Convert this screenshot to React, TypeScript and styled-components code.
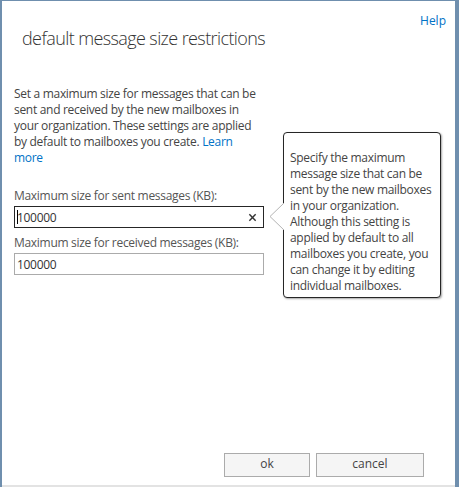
import { createGlobalStyle, styled } from "styled-components";

const GlobalStyle = createGlobalStyle`
  html, body {
    margin: 0;
    padding: 0;
    background: #ffffff;
  }
  body {
    font-family: "Open Sans", "Noto Sans", "Liberation Sans", sans-serif;
  }
`;

const INFO_LINES = [
  "Set a maximum size for messages that can be",
  "sent and received by the new mailboxes in",
  "your organization. These settings are applied",
];

const TIP_LINES = [
  "Specify the maximum",
  "message size that can be",
  "sent by the new mailboxes",
  "in your organization.",
  "Although this setting is",
  "applied by default to all",
  "mailboxes you create, you",
  "can change it by editing",
  "individual mailboxes.",
];

export default function App() {
  return (
    <>
      <GlobalStyle />
      <Window>
        <Dialog>
          <TopBar>
            <HelpLink href="#">Help</HelpLink>
          </TopBar>
          <Title>default message size restrictions</Title>
          <Body>
            <Info>
              {INFO_LINES.map((line) => (
                <div key={line}>{line}</div>
              ))}
              <div>
                by default to mailboxes you create. <Link href="#">Learn</Link>
              </div>
              <div>
                <Link href="#">more</Link>
              </div>
            </Info>
            <Field>
              <Label>Maximum size for sent messages (KB):</Label>
              <InputBox $focused>
                <Caret />
                <InputText>100000</InputText>
                <ClearIcon viewBox="0 0 10 10">
                  <path d="M1.5 1.5 L8.5 8.5 M8.5 1.5 L1.5 8.5" />
                </ClearIcon>
              </InputBox>
            </Field>
            <Field>
              <Label>Maximum size for received messages (KB):</Label>
              <InputBox>
                <InputText>100000</InputText>
              </InputBox>
            </Field>
            <Callout>
              <Arrow viewBox="0 0 16 28">
                <path d="M15 0 L1 13.5 L15 27" />
              </Arrow>
              {TIP_LINES.map((line) => (
                <div key={line}>{line}</div>
              ))}
            </Callout>
          </Body>
          <Footer>
            <Button $width={86}>ok</Button>
            <Button $width={108}>cancel</Button>
          </Footer>
        </Dialog>
      </Window>
    </>
  );
}

const Window = styled.div`
  width: 459px;
  height: 487px;
  box-sizing: border-box;
  border-top: 1px solid #6f8fae;
  border-left: 2px solid #6f8fae;
  border-right: 4px solid #6f8fae;
  background: #ffffff;
  display: flex;
`;

const Dialog = styled.div`
  flex: 1;
  display: flex;
  flex-direction: column;
  border-bottom: 2px solid #e3e3e3;
  position: relative;
  color: #444444;
  font-size: 12px;
  letter-spacing: -0.3px;
`;

const TopBar = styled.div`
  display: flex;
  justify-content: flex-end;
  padding: 11px 9px 0 0;
  height: 18px;
`;

const HelpLink = styled.a`
  color: #0072c6;
  text-decoration: none;
  font-size: 12px;
  line-height: 18px;
  letter-spacing: 0;
`;

const Title = styled.h1`
  margin: -3px 0 0;
  padding-left: 20px;
  font-size: 18px;
  font-weight: 300;
  line-height: 22px;
  letter-spacing: -0.6px;
  color: #333333;
`;

const Body = styled.div`
  flex: 1;
  position: relative;
  padding: 37px 0 0 12px;
  display: flex;
  flex-direction: column;
`;

const Info = styled.div`
  white-space: nowrap;
  line-height: 16px;
  color: #444444;
  margin-bottom: 22px;
`;

const Link = styled.a`
  color: #0072c6;
  text-decoration: none;
`;

const Field = styled.div`
  display: flex;
  flex-direction: column;
  margin-bottom: 7px;
`;

const Label = styled.div`
  line-height: 16px;
  color: #555555;
  margin-bottom: 2px;
`;

const InputBox = styled.div<{ $focused?: boolean }>`
  width: 250px;
  height: 22px;
  box-sizing: border-box;
  border: 1px solid ${({ $focused }) => ($focused ? "#262626" : "#ababab")};
  display: flex;
  align-items: center;
  padding: 0 6px 0 2px;
  position: relative;
`;

const Caret = styled.span`
  position: absolute;
  left: 2px;
  top: 3px;
  width: 1px;
  height: 14px;
  background: #000000;
`;

const InputText = styled.span`
  flex: 1;
  color: #333333;
  font-size: 12px;
`;

const ClearIcon = styled.svg`
  width: 9px;
  height: 9px;
  stroke: #333333;
  stroke-width: 1.6;
  fill: none;
`;

const Callout = styled.div`
  position: absolute;
  left: 281px;
  top: 83px;
  width: 158px;
  height: 166px;
  box-sizing: border-box;
  padding: 17px 0 0 6px;
  border: 1px solid #262626;
  border-radius: 4px;
  background: #ffffff;
  box-shadow: 1px 1px 2px rgba(0, 0, 0, 0.35);
  white-space: nowrap;
  line-height: 16px;
  font-size: 12px;
  color: #444444;
`;

const Arrow = styled.svg`
  position: absolute;
  left: -15px;
  top: 70px;
  width: 16px;
  height: 28px;
  fill: #ffffff;
  stroke: #b4b4b4;
  stroke-width: 1;
`;

const Footer = styled.div`
  display: flex;
  justify-content: flex-end;
  gap: 6px;
  padding: 0 31px 8px 0;
`;

const Button = styled.button<{ $width: number }>`
  width: ${({ $width }) => $width}px;
  height: 24px;
  box-sizing: border-box;
  border: 1px solid #ababab;
  background: #f5f5f5;
  color: #444444;
  font-family: inherit;
  font-size: 12px;
  letter-spacing: 0;
  padding: 0 0 3px;
`;
